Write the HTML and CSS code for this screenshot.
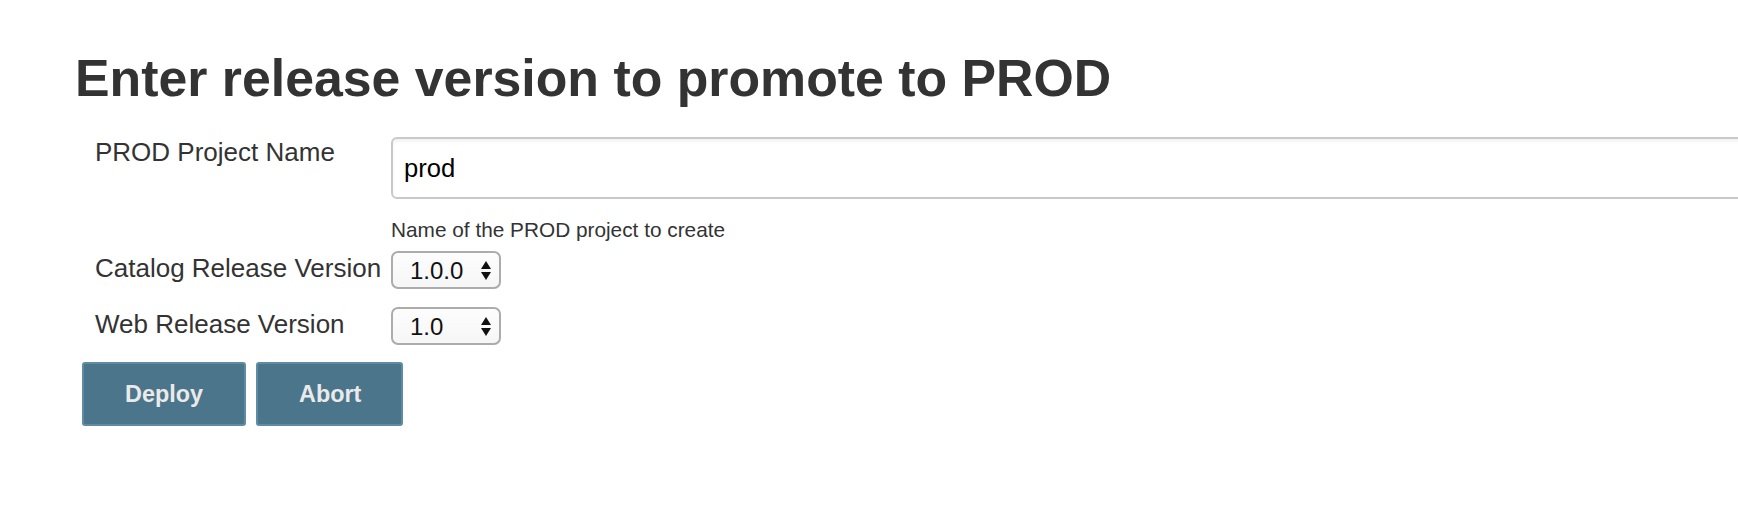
FILE: index.html
```html
<!DOCTYPE html>
<html lang="en">
<head>
<meta charset="utf-8">
<title>Enter release version to promote to PROD</title>
<link rel="stylesheet" href="styles.css">
</head>
<body>
<main class="page">
  <h1 class="title">Enter release version to promote to PROD</h1>
  <form class="form">
    <div class="row">
      <label class="label">PROD Project Name</label>
      <div class="field">
        <input class="text-input" type="text" value="prod">
        <div class="help">Name of the PROD project to create</div>
      </div>
    </div>
    <div class="row row-select row-catalog">
      <label class="label label-select">Catalog Release Version</label>
      <div class="field">
        <div class="select">
          <span class="select-value">1.0.0</span>
          <svg class="select-arrows" width="10" height="19" viewBox="0 0 10 19"><path d="M5 0 L10 8 L0 8 Z" fill="#111"/><path d="M0 11 L10 11 L5 19 Z" fill="#111"/></svg>
        </div>
      </div>
    </div>
    <div class="row row-select row-web">
      <label class="label label-select">Web Release Version</label>
      <div class="field">
        <div class="select">
          <span class="select-value">1.0</span>
          <svg class="select-arrows" width="10" height="19" viewBox="0 0 10 19"><path d="M5 0 L10 8 L0 8 Z" fill="#111"/><path d="M0 11 L10 11 L5 19 Z" fill="#111"/></svg>
        </div>
      </div>
    </div>
    <div class="actions">
      <button class="btn btn-deploy" type="button">Deploy</button>
      <button class="btn btn-abort" type="button">Abort</button>
    </div>
  </form>
</main>
</body>
</html>
```

FILE: styles.css
```css
html, body {
  margin: 0;
  padding: 0;
  background: #ffffff;
  overflow: hidden;
}

body {
  font-family: "Liberation Sans", Helvetica, Arial, sans-serif;
  color: #333333;
}

.page {
  padding: 50px 0 0 75px;
}

.title {
  margin: 0;
  font-size: 51.8px;
  line-height: 56px;
  font-weight: bold;
  color: #333333;
  white-space: nowrap;
}

.form {
  margin: 31px 0 0 7px;
  display: flex;
  flex-direction: column;
}

.row {
  display: flex;
  align-items: flex-start;
  padding-left: 13px;
}

.row-catalog {
  margin-top: 9px;
}

.row-web {
  margin-top: 18px;
}

.label {
  flex: 0 0 296px;
  font-size: 26px;
  line-height: 30px;
  padding-top: 0;
  white-space: nowrap;
  color: #333333;
}

.label-select {
  padding-top: 1.5px;
}

.field {
  flex: 1 1 auto;
  min-width: 0;
}

.text-input {
  display: block;
  box-sizing: border-box;
  width: 1500px;
  height: 62px;
  margin: 0;
  padding: 0 11px;
  border: 2px solid #c9c9c9;
  border-radius: 6px;
  box-shadow: inset 0 3px 3px rgba(0, 0, 0, 0.05);
  font-family: "Liberation Sans", Helvetica, Arial, sans-serif;
  font-size: 25.6px;
  color: #000000;
  background: #ffffff;
  outline: none;
}

.help {
  margin-top: 19px;
  font-size: 20.8px;
  line-height: 24px;
  color: #333333;
  white-space: nowrap;
}

.select {
  box-sizing: border-box;
  width: 110px;
  height: 38px;
  display: flex;
  align-items: center;
  justify-content: space-between;
  padding: 0 8px 0 17px;
  border: 2px solid #acacac;
  border-radius: 7px;
  background: linear-gradient(#fdfdfd, #f6f6f6);
}

.select-value {
  font-size: 24px;
  line-height: 28px;
  color: #111111;
  padding-top: 2px;
}

.select-arrows {
  display: block;
}

.actions {
  display: flex;
  gap: 10px;
  margin-top: 17px;
}

.btn {
  box-sizing: border-box;
  height: 64px;
  margin: 0;
  padding: 0 41px;
  border: 2px solid #5f8ca3;
  border-radius: 3px;
  background: #4b758b;
  color: #eaeaea;
  font-family: "Liberation Sans", Helvetica, Arial, sans-serif;
  font-size: 23.4px;
  font-weight: bold;
  cursor: pointer;
}

.btn-deploy {
  width: 164px;
}

.btn-abort {
  width: 147px;
}
```
